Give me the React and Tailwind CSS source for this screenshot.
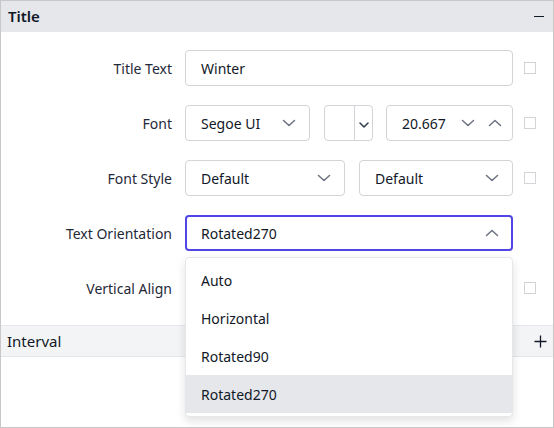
import React from "react";

const Chevron = ({ up = false, className = "" }) => (
  <svg width="14" height="14" viewBox="0 0 14 14" className={className} fill="none">
    <path
      d={up ? "M1.5 9.5 L7 4.5 L12.5 9.5" : "M1.5 4.5 L7 9.5 L12.5 4.5"}
      stroke="currentColor"
      strokeWidth="1.5"
      strokeLinecap="round"
      strokeLinejoin="round"
    />
  </svg>
);

const Check = () => (
  <div className="w-[12px] h-[12px] border border-[#d4d4d8] bg-white shrink-0" />
);

const Label = ({ children }) => (
  <div className="w-[171px] shrink-0 text-right text-[14px] text-[#1f2937]">{children}</div>
);

const Select = ({ value, w, up = false, focus = false }) => (
  <div
    className={
      "h-[36px] rounded-[4px] bg-white flex items-center justify-between text-[14px] text-[#111827] " +
      (focus ? "border-2 border-[#4f46e5] pl-[14px] pr-[12px]" : "border border-[#d4d4d8] pl-[15px] pr-[13px]")
    }
    style={{ width: w }}
  >
    <span>{value}</span>
    <Chevron up={up} className="text-[#6b7280]" />
  </div>
);

export default function App() {
  return (
    <div className="w-[554px] h-[428px] border border-[#c8c8c8] bg-white font-['Noto_Sans',sans-serif] overflow-hidden">
      <div className="h-[31px] bg-[#e5e7eb] flex items-center justify-between pl-[7px] pr-[9px]">
        <span className="text-[15px] font-semibold text-[#111827]">Title</span>
        <span className="w-[10px] h-[1.5px] bg-[#111827]" />
      </div>
      <div className="flex flex-col gap-[19px] pt-[18px] pb-[19px]">
        <div className="flex items-center h-[36px]">
          <Label>Title Text</Label>
          <div className="ml-[13px] w-[328px] h-[36px] rounded-[4px] border border-[#d4d4d8] flex items-center pl-[15px] text-[14px] text-[#111827]">
            Winter
          </div>
          <div className="ml-[11px]"><Check /></div>
        </div>
        <div className="flex items-center h-[36px]">
          <Label>Font</Label>
          <div className="ml-[13px] flex items-center">
            <Select value="Segoe UI" w={125} />
            <div className="ml-[14px] w-[49px] h-[36px] rounded-[4px] border border-[#d4d4d8] flex">
              <div className="w-[30px] border-r border-[#d4d4d8]" />
              <div className="flex-1 flex items-center justify-center pt-[3px]">
                <svg width="12" height="12" viewBox="0 0 12 12" fill="none">
                  <path d="M2 4 L6 8 L10 4" stroke="#374151" strokeWidth="1.6" strokeLinecap="round" strokeLinejoin="round" />
                </svg>
              </div>
            </div>
            <div className="ml-[13px] w-[127px] h-[36px] rounded-[4px] border border-[#d4d4d8] flex items-center pl-[15px] pr-[10px] text-[14px] text-[#111827]">
              <span className="flex-1">20.667</span>
              <Chevron className="text-[#6b7280]" />
              <Chevron up className="text-[#6b7280] ml-[13px]" />
            </div>
          </div>
          <div className="ml-[11px]"><Check /></div>
        </div>
        <div className="flex items-center h-[36px]">
          <Label>Font Style</Label>
          <div className="ml-[13px] flex items-center gap-[14px]">
            <Select value="Default" w={160} />
            <Select value="Default" w={154} />
          </div>
          <div className="ml-[11px]"><Check /></div>
        </div>
        <div className="flex items-center h-[36px]">
          <Label>Text Orientation</Label>
          <div className="ml-[13px] relative">
            <Select value="Rotated270" w={328} up focus />
            <div className="absolute left-0 top-[42px] w-[328px] z-10 bg-white rounded-[4px] border border-[#e5e7eb] shadow-[0_4px_10px_rgba(0,0,0,0.12)] py-[3px] text-[14px] text-[#111827]">
              <div className="h-[38px] flex items-center pl-[15px]">Auto</div>
              <div className="h-[38px] flex items-center pl-[15px]">Horizontal</div>
              <div className="h-[38px] flex items-center pl-[15px]">Rotated90</div>
              <div className="h-[38px] flex items-center pl-[15px] bg-[#e5e7eb]">Rotated270</div>
            </div>
          </div>
        </div>
        <div className="flex items-center h-[36px]">
          <Label>Vertical Align</Label>
          <div className="ml-[13px] w-[328px] h-[36px]" />
          <div className="ml-[11px]"><Check /></div>
        </div>
      </div>
      <div className="h-[32px] bg-[#f3f4f6] border-y border-[#e5e7eb] flex items-center justify-between pl-[6px] pr-[6px]">
        <span className="text-[15px] text-[#111827]">Interval</span>
        <svg width="13" height="13" viewBox="0 0 13 13">
          <path d="M6.5 0.5 V12.5 M0.5 6.5 H12.5" stroke="#111827" strokeWidth="1.3" />
        </svg>
      </div>
    </div>
  );
}
